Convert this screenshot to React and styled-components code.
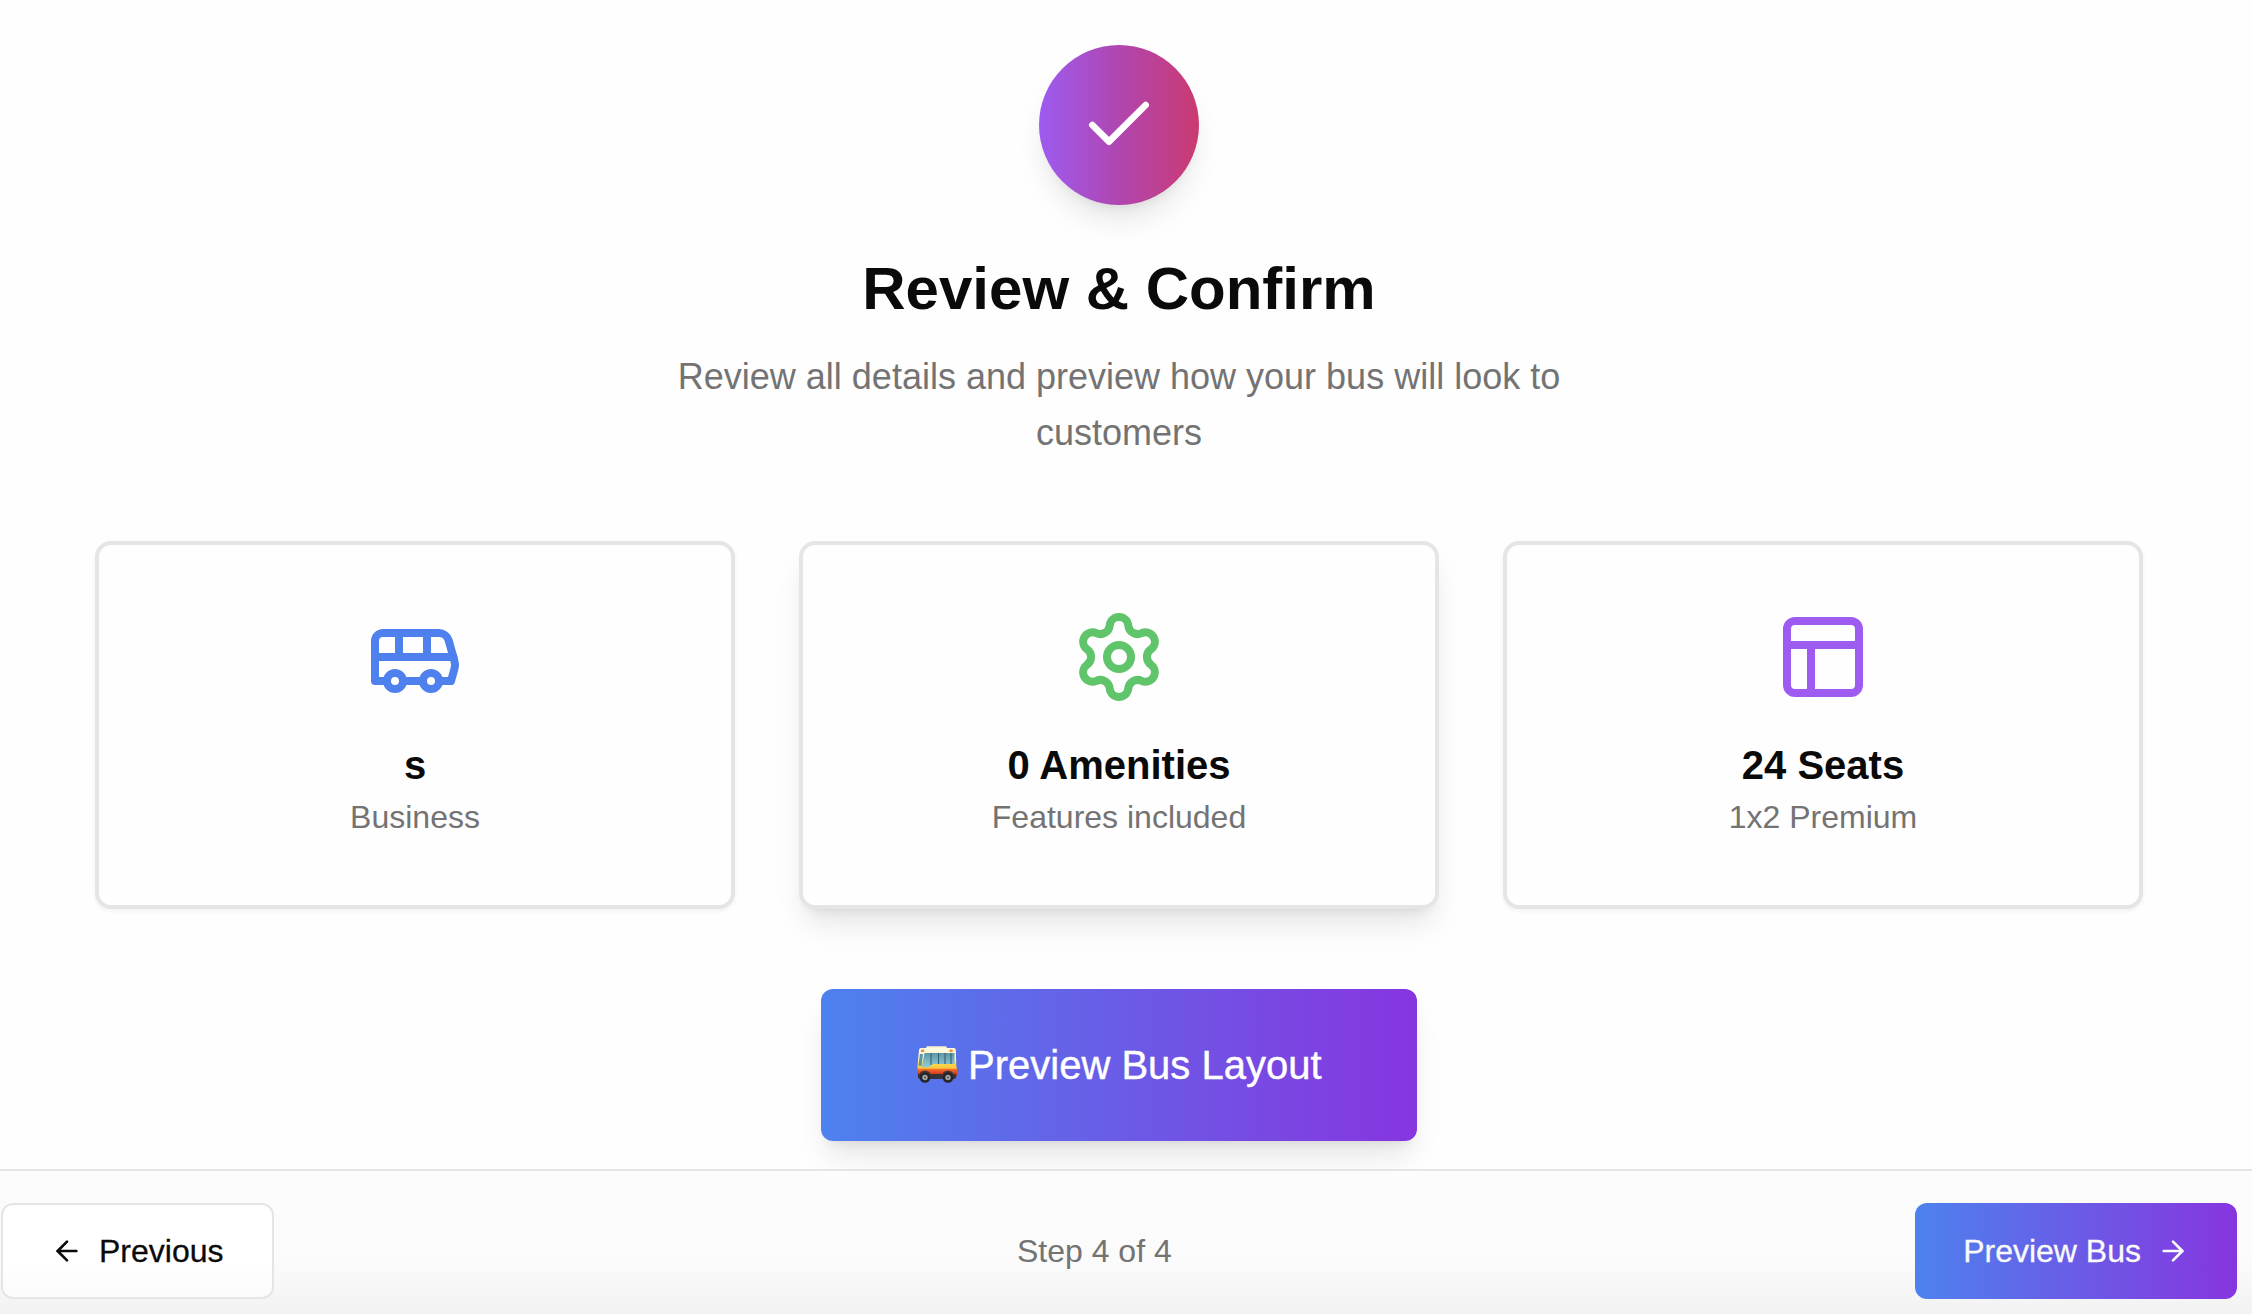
import React from "react";
import styled, { createGlobalStyle } from "styled-components";
import { Check, Settings, ArrowLeft, ArrowRight } from "lucide-react";

const GlobalStyle = createGlobalStyle`
  *, *::before, *::after { box-sizing: border-box; }
  html, body { margin: 0; padding: 0; }
  body {
    background: #fefefe;
    color: #0a0a0a;
    font-family: "Liberation Sans", Arial, Helvetica, sans-serif;
    overflow: hidden;
  }
`;

const Page = styled.div`
  display: flex;
  flex-direction: column;
  height: 1314px;
  overflow: hidden;
`;

const Main = styled.main`
  flex: 0 0 1169px;
  width: 2238px;
  padding-top: 45px;
  display: flex;
  flex-direction: column;
  align-items: center;
`;

const Badge = styled.div`
  width: 160px;
  height: 160px;
  flex: none;
  border-radius: 50%;
  display: flex;
  align-items: center;
  justify-content: center;
  color: #fff;
  background: linear-gradient(to right, #9d5bf0, #b046b0 50%, #cb3a70);
  box-shadow: 0 20px 30px -6px rgba(0, 0, 0, 0.1), 0 8px 12px -8px rgba(0, 0, 0, 0.1);
`;

const Title = styled.h1`
  margin: 48px 0 24px;
  font-size: 60px;
  line-height: 72px;
  font-weight: 700;
`;

const Lead = styled.p`
  margin: 0;
  width: 896px;
  text-align: center;
  font-size: 36px;
  line-height: 56px;
  color: #737373;
`;

const Cards = styled.section`
  display: grid;
  grid-template-columns: repeat(3, 640px);
  gap: 64px;
  margin: 80px 0;
`;

const Card = styled.article`
  display: flex;
  flex-direction: column;
  align-items: center;
  height: 368px;
  padding: 64px;
  border: 4px solid #e5e5e5;
  border-radius: 16px;
  background: #fefefe;
  box-shadow: ${({ $raised }) =>
    $raised
      ? "0 20px 30px -6px rgba(0,0,0,0.1), 0 8px 12px -8px rgba(0,0,0,0.1)"
      : "0 2px 4px 0 rgba(0,0,0,0.05)"};
`;

const IconSlot = styled.div`
  height: 96px;
  margin-bottom: 32px;
  color: ${({ $color }) => $color};
  svg { display: block; }
`;

const CardTitle = styled.h3`
  margin: 0;
  font-size: 40px;
  line-height: 56px;
  font-weight: 700;
`;

const CardText = styled.p`
  margin: 0;
  font-size: 32px;
  line-height: 48px;
  color: #737373;
`;

const PreviewLayout = styled.button`
  display: flex;
  align-items: center;
  width: 596px;
  height: 152px;
  flex: none;
  padding: 0 90px 0 96px;
  border: 0;
  border-radius: 12px;
  color: #fff;
  font: 400 40px/56px "Liberation Sans", Arial, Helvetica, sans-serif;
  -webkit-text-stroke: 0.4px currentColor;
  white-space: nowrap;
  background: linear-gradient(to right, #4d82ee, #8735df);
  box-shadow: 0 20px 30px -6px rgba(0, 0, 0, 0.1), 0 8px 12px -8px rgba(0, 0, 0, 0.1);
  svg { flex: none; margin-right: 11px; }
`;

const Footer = styled.footer`
  position: relative;
  flex: 1;
  display: flex;
  align-items: flex-start;
  justify-content: space-between;
  padding: 32px 15px 0 1px;
  border-top: 2px solid #e5e5e5;
  background: linear-gradient(to bottom, #fcfcfc 0, #fbfbfb 90px, #f2f2f2 143px);
`;

const NavButton = styled.button`
  display: flex;
  align-items: center;
  gap: 16px;
  height: 96px;
  padding: 0 48px;
  border: 0;
  border-radius: 12px;
  font: 400 32px/48px "Liberation Sans", Arial, Helvetica, sans-serif;
  -webkit-text-stroke: 0.3px currentColor;
  white-space: nowrap;
`;

const Previous = styled(NavButton)`
  border: 2px solid #e5e5e5;
  color: #0a0a0a;
  background: linear-gradient(to bottom, #fff 60%, #fbfbfb);
`;

const Next = styled(NavButton)`
  color: #fafafa;
  background: linear-gradient(to right, #4d82ee, #8735df);
`;

const Step = styled.span`
  margin-top: 24px;
  font-size: 32px;
  line-height: 48px;
  color: #737373;
`;

function BusOutline() {
  return (
    <svg width="96" height="96" viewBox="0 0 24 24" fill="none" stroke="currentColor" strokeWidth="2" strokeLinecap="round" strokeLinejoin="round">
      <path d="M8 6v6M15 6v6M2 12h19.6" />
      <path d="M18 18h3s.5-1.7.8-2.8c.1-.4.2-.8.2-1.2 0-.4-.1-.8-.2-1.2l-1.4-5C20.1 6.8 19.1 6 18 6H4a2 2 0 0 0-2 2v10h3" />
      <circle cx="7" cy="18" r="2" />
      <path d="M9 18h5" />
      <circle cx="16" cy="18" r="2" />
    </svg>
  );
}

function PanelsOutline() {
  return (
    <svg width="96" height="96" viewBox="0 0 24 24" fill="none" stroke="currentColor" strokeWidth="2" strokeLinecap="round" strokeLinejoin="round">
      <rect x="3" y="3" width="18" height="18" rx="2" />
      <path d="M3 9h18M9 21V9" />
    </svg>
  );
}

function BusEmoji() {
  return (
    <svg width="40" height="40" viewBox="0 0 40 40">
      <defs>
        <linearGradient id="busBody" x1="0" y1="0" x2="0" y2="1">
          <stop offset="0" stopColor="#fffbe2" />
          <stop offset="0.42" stopColor="#f7efc4" />
          <stop offset="0.52" stopColor="#ffdc4e" />
          <stop offset="0.7" stopColor="#fdc43a" />
          <stop offset="0.73" stopColor="#f5722c" />
          <stop offset="0.86" stopColor="#dd4420" />
          <stop offset="1" stopColor="#9c3020" />
        </linearGradient>
        <linearGradient id="busGlass" x1="0" y1="0" x2="0" y2="1">
          <stop offset="0" stopColor="#5d97a6" />
          <stop offset="1" stopColor="#8fccd8" />
        </linearGradient>
      </defs>
      <rect x="9" y="1.2" width="21" height="4" rx="1.5" fill="#f9f3d2" />
      <path d="M4 3h33q1.600 0 1.800 2l.5 16 .7 3v6q0 2-2 2H3q-2.500 0-2.500-3v-8L2 5q.3-2 2-2z" fill="url(#busBody)" />
      <path d="M3 9L1.500 20.500 4.500 21 6 9z" fill="#5c96a4" />
      <path d="M7.500 8h30v11H17q-2 0-3 1.500-1 1.700-3 1.700H6q-1 0-.9-1.200z" fill="url(#busGlass)" />
      <path d="M14 8v12M21.500 8v11M28 8v11M34 8v11" stroke="#35606f" strokeWidth="1.100" />
      <rect x="4" y="4.500" width="3.200" height="2.500" rx=".6" fill="#ef9130" />
      <rect x="32.500" y="4.500" width="3.200" height="2.500" rx=".6" fill="#ef9130" />
      <path d="M1 29h38v3q0 2-2 2H3q-2 0-2-2z" fill="#343436" />
      <path d="M2 31a6 5.600 0 0 1 12 0M25 31a6 5.600 0 0 1 12 0" fill="#4a3430" />
      <circle cx="8" cy="32.500" r="5.300" fill="#252527" />
      <circle cx="31" cy="32.500" r="5.300" fill="#252527" />
      <circle cx="8" cy="32.500" r="2.700" fill="#a5a3a6" />
      <circle cx="31" cy="32.500" r="2.700" fill="#a5a3a6" />
      <circle cx="8" cy="32.500" r="1" fill="#555" />
      <circle cx="31" cy="32.500" r="1" fill="#555" />
    </svg>
  );
}

const summary = [
  { title: "s", text: "Business", color: "#4e81ee", icon: <BusOutline /> },
  { title: "0 Amenities", text: "Features included", color: "#5fc46a", icon: <Settings size={96} />, raised: true },
  { title: "24 Seats", text: "1x2 Premium", color: "#9d5bf0", icon: <PanelsOutline /> },
];

export default function App() {
  return (
    <Page>
      <GlobalStyle />
      <Main>
        <Badge><Check size={80} /></Badge>
        <Title>Review &amp; Confirm</Title>
        <Lead>Review all details and preview how your bus will look to customers</Lead>
        <Cards>
          {summary.map((item) => (
            <Card key={item.title} $raised={item.raised}>
              <IconSlot $color={item.color}>{item.icon}</IconSlot>
              <CardTitle>{item.title}</CardTitle>
              <CardText>{item.text}</CardText>
            </Card>
          ))}
        </Cards>
        <PreviewLayout><BusEmoji />Preview Bus Layout</PreviewLayout>
      </Main>
      <Footer>
        <Previous><ArrowLeft size={32} />Previous</Previous>
        <Step>Step 4 of 4</Step>
        <Next>Preview Bus<ArrowRight size={32} /></Next>
      </Footer>
    </Page>
  );
}
